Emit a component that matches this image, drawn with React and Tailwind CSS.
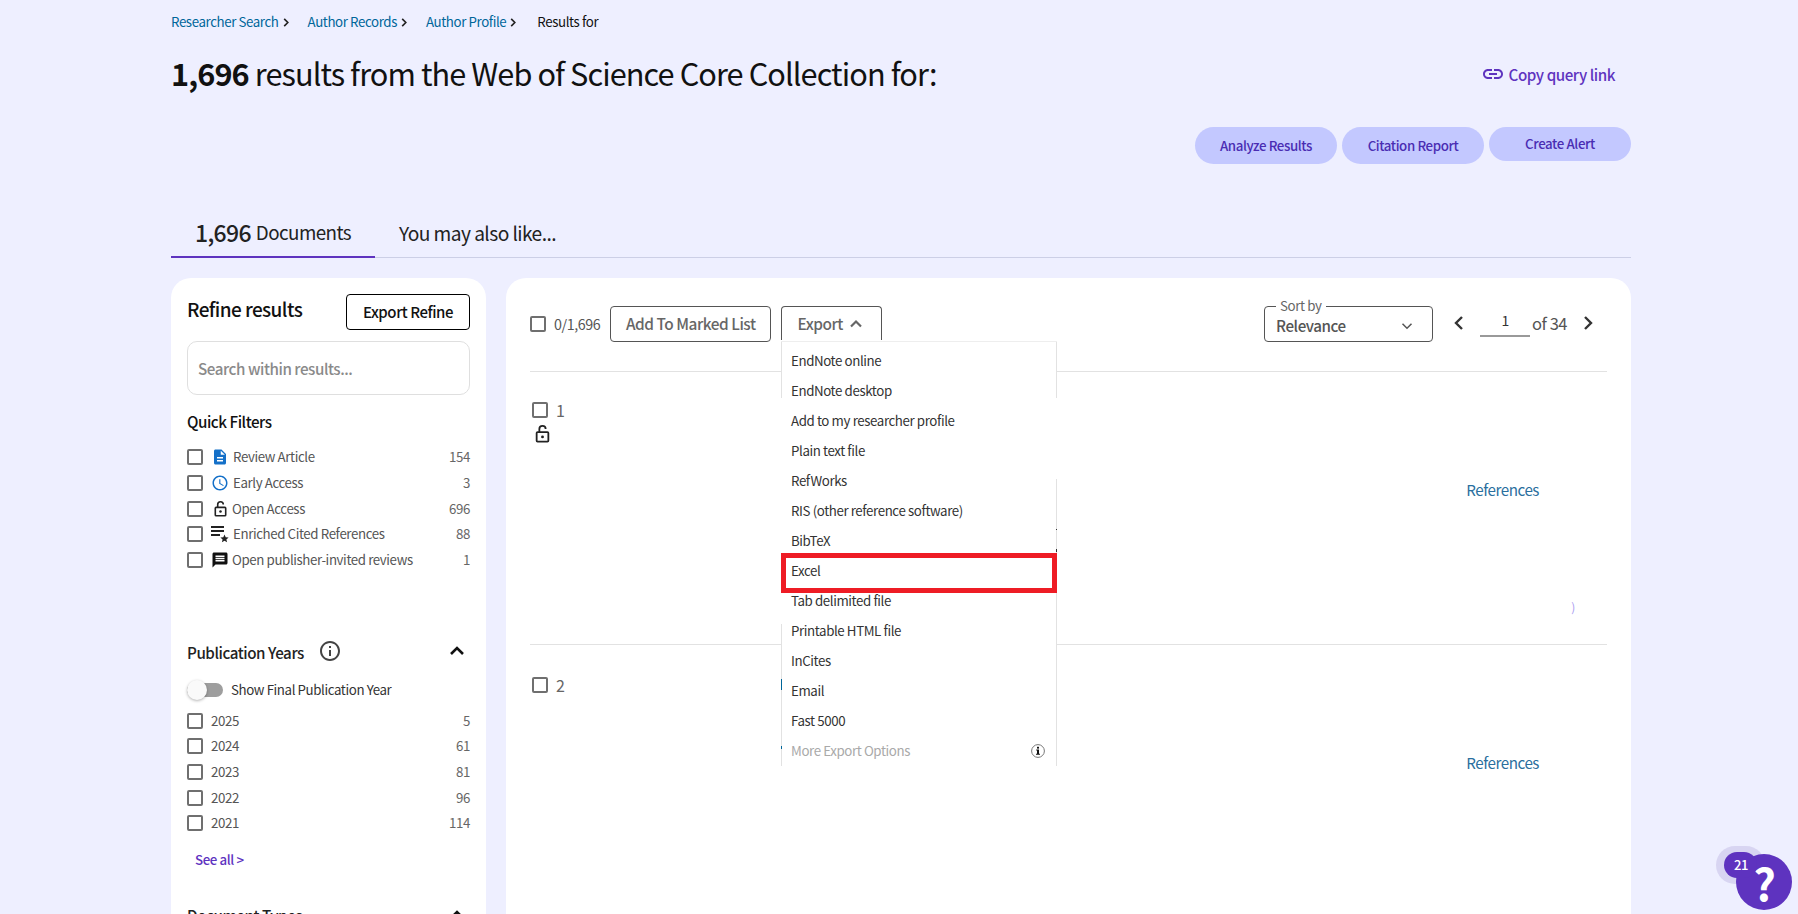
import { MdDescription, MdAccessTime, MdMessage, MdLink, MdInfoOutline } from "react-icons/md";

const font = { fontFamily: '"Noto Sans CJK SC", "Open Sans", sans-serif' };

const chevrons = {
  up: "M6 15l6-6 6 6",
  down: "M6 9l6 6 6-6",
  left: "M15 6l-6 6 6 6",
  right: "M9 6l6 6-6 6",
};

function Chevron({ dir, className, width = 2 }) {
  return (
    <svg viewBox="0 0 24 24" className={className} fill="none" stroke="currentColor" strokeWidth={width}>
      <path d={chevrons[dir]} />
    </svg>
  );
}

function LockIcon({ className }) {
  return (
    <svg viewBox="0 0 16 20" className={className} fill="none" stroke="currentColor" strokeWidth="2">
      <path d="M4.5 8V4.5a3.5 3.5 0 0 1 7 0" />
      <rect x="1.5" y="8" width="13" height="10.5" rx="1" />
      <circle cx="8" cy="13.2" r="1.6" fill="currentColor" stroke="none" />
    </svg>
  );
}

function EnrichedIcon() {
  return (
    <svg viewBox="0 0 18 18" className="w-[18px] h-[18px] text-[#222]" fill="currentColor">
      <rect x="0" y="1" width="13" height="2" />
      <rect x="0" y="5" width="13" height="2" />
      <rect x="0" y="9" width="9" height="2" />
      <path d="M13.5 9.5l1.2 2.7 2.9.3-2.2 1.9.7 2.9-2.6-1.5-2.6 1.5.7-2.9-2.2-1.9 2.9-.3z" />
    </svg>
  );
}

function MenuInfoIcon() {
  return (
    <svg viewBox="0 0 14 14" className="w-[14px] h-[14px]" fill="none">
      <circle cx="7" cy="7" r="6.4" stroke="#777" strokeWidth="1" />
      <rect x="6" y="2.8" width="2" height="1.8" fill="#111" />
      <path d="M5.2 5.6H8v4.2h1v1H5v-1h1V6.6h-.8z" fill="#111" />
    </svg>
  );
}

function Checkbox() {
  return <span className="block w-[16px] h-[16px] shrink-0 border-2 border-[#6f6f6f] rounded-[2px] bg-white" />;
}

function Crumb({ label }) {
  return (
    <div className="flex items-center mr-[19px]">
      <span className="text-[#00669a]">{label}</span>
      <svg viewBox="0 0 6 10" className="w-[6px] h-[9px] ml-[4px] text-[#222]" fill="none" stroke="currentColor" strokeWidth="1.8">
        <path d="M1 1l4 4-4 4" />
      </svg>
    </div>
  );
}

function PillButton({ label, height }) {
  return (
    <button className={`w-[142px] ${height} rounded-[20px] bg-[#c3c8ff] text-[#4a2db3] text-[13.3px] font-medium`}>
      {label}
    </button>
  );
}

function FilterRow({ icon, label, count, gap }) {
  return (
    <div className="h-[25.6px] flex items-center text-[13.3px] text-[#555]">
      <Checkbox />
      <span className="w-[18px] ml-[8px] flex justify-center">{icon}</span>
      <span className={`${gap} flex-1`}>{label}</span>
      <span className="text-[#666]">{count}</span>
    </div>
  );
}

function YearRow({ year, count }) {
  return (
    <div className="h-[25.6px] flex items-center text-[13.3px] text-[#555]">
      <Checkbox />
      <span className="ml-[8px] flex-1">{year}</span>
      <span className="text-[#666]">{count}</span>
    </div>
  );
}

function Sidebar() {
  return (
    <aside className="w-[315px] shrink-0 bg-white rounded-t-[20px] px-[16px] pt-[16px] pb-[40px]">
      <div className="flex justify-between">
        <h2 className="text-[19px] leading-[30px] font-medium text-[#111]">Refine results</h2>
        <button className="w-[124px] h-[36px] border border-black rounded-[4px] text-[15px] font-medium text-[#111]">
          Export Refine
        </button>
      </div>
      <div className="mt-[11px] h-[54px] border border-[#dfdfdf] rounded-[10px] flex items-center px-[10px] text-[15.2px] font-medium text-[#8a8a8a]">
        Search within results...
      </div>
      <h3 className="mt-[14px] text-[15.2px] leading-[24px] font-medium text-[#111]">Quick Filters</h3>
      <div className="mt-[11.6px]">
        <FilterRow icon={<MdDescription className="w-[18px] h-[18px] text-[#1470c8]" />} label="Review Article" count="154" gap="ml-[4px]" />
        <FilterRow icon={<MdAccessTime className="w-[18px] h-[18px] text-[#1470c8]" />} label="Early Access" count="3" gap="ml-[4px]" />
        <FilterRow icon={<LockIcon className="w-[13px] h-[16px] text-[#222]" />} label="Open Access" count="696" gap="ml-[3px]" />
        <FilterRow icon={<EnrichedIcon />} label="Enriched Cited References" count="88" gap="ml-[4px]" />
        <FilterRow icon={<MdMessage className="w-[18px] h-[18px] text-[#111]" />} label="Open publisher-invited reviews" count="1" gap="ml-[3px]" />
      </div>

      <div className="mt-[68px] flex items-center h-[24px]">
        <h3 className="text-[15.2px] font-medium text-[#222]">Publication Years</h3>
        <MdInfoOutline className="w-[24px] h-[24px] text-[#444] ml-[14px] -mt-[4px]" />
        <Chevron dir="up" width={2.6} className="w-[24px] h-[24px] text-[#111] ml-auto mr-[1px] -mt-[4px]" />
      </div>
      <div className="mt-[13px] flex items-center h-[24px]">
        <span className="relative block w-[36px] h-[14px] rounded-full bg-[#9e9e9e]">
          <span className="absolute left-0 -top-[3px] w-[20px] h-[20px] rounded-full bg-[#fafafa] shadow-[0_1px_3px_rgba(0,0,0,0.3)]" />
        </span>
        <span className="ml-[8px] text-[13.3px] text-[#333]">Show Final Publication Year</span>
      </div>
      <div className="mt-[6.4px]">
        <YearRow year="2025" count="5" />
        <YearRow year="2024" count="61" />
        <YearRow year="2023" count="81" />
        <YearRow year="2022" count="96" />
        <YearRow year="2021" count="114" />
      </div>
      <div className="mt-[13px] ml-[8px] text-[13.3px] leading-[22px] font-medium text-[#5e33bf]">See all &gt;</div>
      <div className="mt-[32px] flex items-center justify-between h-[24px]">
        <h3 className="text-[15.2px] font-medium text-[#222]">Document Types</h3>
        <Chevron dir="up" width={2.6} className="w-[24px] h-[24px] text-[#111] mr-[1px]" />
      </div>
    </aside>
  );
}

const exportItems = [
  "EndNote online",
  "EndNote desktop",
  "Add to my researcher profile",
  "Plain text file",
  "RefWorks",
  "RIS (other reference software)",
  "BibTeX",
  "Excel",
  "Tab delimited file",
  "Printable HTML file",
  "InCites",
  "Email",
  "Fast 5000",
];

function ExportMenu() {
  return (
    <div className="absolute left-[275px] top-[63px] w-[276px] h-[425px] bg-white pt-[5px] z-10">
      {/* the side borders only show in a few stretches in the capture */}
      <span className="absolute left-0 top-0 w-px h-[57px] bg-[#e2e2e2]" />
      <span className="absolute right-0 top-0 w-px h-[57px] bg-[#e2e2e2]" />
      <span className="absolute left-0 top-[283px] w-px h-[142px] bg-[#e2e2e2]" />
      <span className="absolute right-0 top-[138px] w-px h-[287px] bg-[#e2e2e2]" />
      <span className="absolute top-0 left-0 right-0 h-px bg-[#eeeeee]" />
      <span className="absolute left-0 top-[338px] w-px h-[11px] bg-[#00669a]" />
      <span className="absolute left-0 top-[405px] w-px h-[3px] bg-[#00669a]" />
      <span className="absolute right-0 top-[188px] w-px h-[1px] bg-[#333]" />
      <span className="absolute right-0 top-[208px] w-px h-[3px] bg-[#333]" />
      {exportItems.map((item) => (
        <div key={item} className="h-[30px] flex items-center px-[10px] text-[13.3px] text-[#333]">
          {item}
        </div>
      ))}
      <div className="h-[30px] flex items-center justify-between pl-[10px] pr-[12px] text-[13.3px] text-[#a9a9a9]">
        More Export Options
        <MenuInfoIcon />
      </div>
      <div className="absolute left-0 right-0 top-[212px] h-[40px] border-[5px] border-[#ee1c25]" />
    </div>
  );
}

function Results() {
  return (
    <main className="relative flex-1 bg-white rounded-t-[20px] px-[24px] pt-[28px]">
      <div className="flex items-start h-[65px]">
        <div className="flex items-center h-[36px] text-[14.3px] text-[#555]">
          <Checkbox />
          <span className="ml-[8px]">0/1,696</span>
        </div>
        <button className="ml-[10px] w-[161px] h-[36px] border border-[#555] rounded-[4px] text-[15.4px] font-medium text-[#666]">
          Add To Marked List
        </button>
        <button className="ml-[10px] w-[101px] h-[34px] border border-b-0 border-[#555] rounded-t-[4px] flex items-center justify-center text-[15.4px] font-medium text-[#666]">
          Export
          <Chevron dir="up" width={2.6} className="w-[20px] h-[20px] ml-[3px]" />
        </button>
        <div className="ml-auto mr-[7px] flex items-center h-[34px]">
          <div className="relative self-start w-[169px] h-[36px] border border-[#555] rounded-[4px] flex items-center justify-between pl-[11px] pr-[16px] pt-[3px] text-[15.2px] font-medium text-[#555]">
            <span className="absolute -top-[9px] left-[11px] px-[4px] bg-white text-[13.3px] leading-[16px] font-normal text-[#666]">
              Sort by
            </span>
            Relevance
            <Chevron dir="down" className="w-[18px] h-[18px]" />
          </div>
          <Chevron dir="left" width={2.4} className="ml-[14px] w-[24px] h-[24px] text-[#333]" />
          <div className="ml-[9px] w-[50px] h-[28px] border-b-2 border-[#999] text-center text-[14px] leading-[22px] text-[#333]">1</div>
          <span className="ml-[2px] text-[16.5px] text-[#555]">of 34</span>
          <Chevron dir="right" width={2.4} className="ml-[9px] w-[24px] h-[24px] text-[#333]" />
        </div>
      </div>

      <div className="h-[273px] border-t border-[#e2e2e2] pt-[28px] relative">
        <div className="flex items-center pl-[2px] h-[20px] text-[16px] text-[#666]">
          <Checkbox />
          <span className="ml-[8px]">1</span>
        </div>
        <LockIcon className="mt-[5px] ml-[5px] w-[15px] h-[18px] text-[#222]" />
        <div className="absolute right-[68px] top-[106px] text-[15.2px] text-[#2a6f9e]">References</div>
        <div className="absolute right-[32px] top-[228px] text-[12px] leading-[14px] text-[#a99cf0]">)</div>
      </div>

      <div className="h-[300px] border-t border-[#e2e2e2] pt-[30px] relative">
        <div className="flex items-center pl-[2px] h-[20px] text-[16px] text-[#666]">
          <Checkbox />
          <span className="ml-[8px]">2</span>
        </div>
        <div className="absolute right-[68px] top-[106px] text-[15.2px] text-[#2a6f9e]">References</div>
      </div>

      <ExportMenu />
    </main>
  );
}

export default function App() {
  return (
    <div style={font} className="relative h-[914px] overflow-hidden bg-[#eeefff] [&_*]:tracking-[-0.03em]">
      <div className="mx-[171px] w-[1460px]">
        <nav className="pt-[13px] h-[52px] flex items-start text-[13.3px] leading-[18px]">
          <Crumb label="Researcher Search" />
          <Crumb label="Author Records" />
          <Crumb label="Author Profile" />
          <span className="text-[#111] ml-[2px]">Results for</span>
        </nav>

        <div className="flex justify-between items-center h-[40px]">
          <h1 className="pt-[2px] text-[30.7px] text-[#111]">
            <span className="font-bold">1,696</span> results from the Web of Science Core Collection for:
          </h1>
          <div className="flex items-center mr-[16px] mt-[4px] text-[15.2px] font-medium text-[#5e33bf]">
            <MdLink className="w-[24px] h-[24px] mr-[4px]" />
            Copy query link
          </div>
        </div>

        <div className="mt-[35px] flex justify-end items-start gap-[5px]">
          <PillButton label="Analyze Results" height="h-[37px]" />
          <PillButton label="Citation Report" height="h-[37px]" />
          <PillButton label="Create Alert" height="h-[34px]" />
        </div>

        <div className="mt-[54px] flex h-[40px] border-b border-[#cccfe6] text-[#222]">
          <div className="w-[204px] h-[40px] pb-[9px] border-b-2 border-[#5e33bf] flex justify-center items-center">
            <span className="text-[23px] font-medium">1,696</span>
            <span className="ml-[5px] text-[18.8px]">Documents</span>
          </div>
          <div className="ml-[24px] h-[40px] pb-[9px] flex items-center text-[19.2px]">You may also like...</div>
        </div>

        <div className="mt-[20px] flex gap-[20px] items-start">
          <Sidebar />
          <Results />
        </div>
      </div>

      {/* help widget */}
      <div className="absolute left-[1716px] top-[846px] w-[49px] h-[38px] rounded-full bg-[#d8d5f2]" />
      <div className="absolute left-[1736px] top-[854px] w-[56px] h-[56px] rounded-full bg-[#5e33bf] text-white flex items-center justify-center text-[44px] font-bold leading-none">
        ?
      </div>
      <div className="absolute left-[1724px] top-[852px] w-[33px] h-[26px] rounded-full bg-[#5e33bf] text-white text-[13px] font-medium leading-[26px] pl-[10px]">
        21
      </div>
    </div>
  );
}
